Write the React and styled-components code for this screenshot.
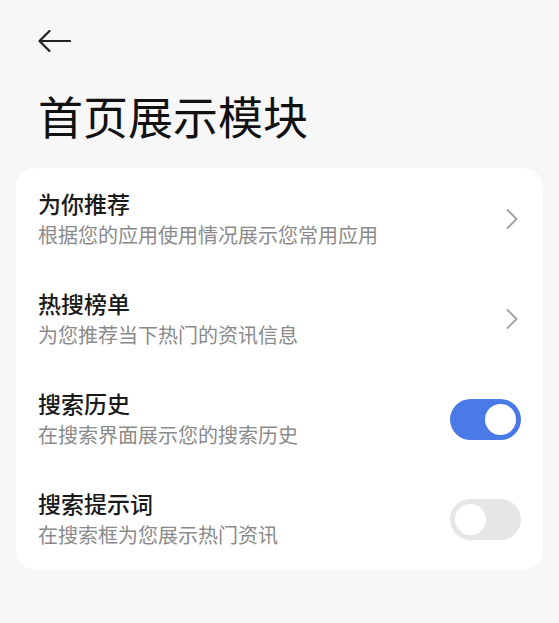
import React, { useState } from "react";
import styled, { createGlobalStyle } from "styled-components";

const GlobalStyle = createGlobalStyle`
  html, body {
    margin: 0;
    padding: 0;
    background: #f7f7f7;
  }
  body {
    font-family: "Noto Sans CJK SC", "Noto Sans", sans-serif;
    color: #1a1a1a;
  }
`;

const Page = styled.div`
  min-height: 623px;
  background: #f7f7f7;
  padding: 30px 16px 0 16px;
  box-sizing: border-box;
`;

const BackButton = styled.button`
  display: block;
  margin: 0 0 0 22px;
  padding: 0;
  border: none;
  background: none;
  width: 33px;
  height: 22px;
  cursor: pointer;

  svg {
    display: block;
  }
`;

const Title = styled.h1`
  margin: 36px 0 0 22px;
  font-size: 45px;
  line-height: 56px;
  font-weight: 400;
  color: #111;
`;

const Card = styled.div`
  margin-top: 24px;
  background: #fff;
  border-radius: 20px;
  padding: 1px 0;
`;

const Row = styled.div`
  display: flex;
  align-items: center;
  justify-content: space-between;
  padding: 18px 22px 18px 22px;
  height: 64px;
`;

const Texts = styled.div`
  display: flex;
  flex-direction: column;
`;

const RowTitle = styled.div`
  font-size: 23px;
  line-height: 32px;
  font-weight: 500;
  color: #1a1a1a;
`;

const RowSub = styled.div`
  font-size: 20px;
  line-height: 32px;
  color: #8a8a8a;
`;

const Chevron = styled.svg`
  margin-right: 2px;
  flex-shrink: 0;
`;

const Track = styled.button`
  position: relative;
  width: 71px;
  height: 41px;
  border: none;
  padding: 0;
  border-radius: 21px;
  background: ${(p) => (p.on ? "#4a7ae8" : "#e6e6e6")};
  cursor: pointer;
  flex-shrink: 0;
`;

const Knob = styled.span`
  position: absolute;
  top: 5px;
  left: ${(p) => (p.on ? "35px" : "5px")};
  width: 31px;
  height: 31px;
  border-radius: 50%;
  background: #fff;
`;

function Toggle({ on, onChange }) {
  return (
    <Track on={on} onClick={onChange}>
      <Knob on={on} />
    </Track>
  );
}

const items = [
  { title: "为你推荐", sub: "根据您的应用使用情况展示您常用应用", type: "link" },
  { title: "热搜榜单", sub: "为您推荐当下热门的资讯信息", type: "link" },
  { title: "搜索历史", sub: "在搜索界面展示您的搜索历史", type: "toggle", on: true },
  { title: "搜索提示词", sub: "在搜索框为您展示热门资讯", type: "toggle", on: false },
];

export default function App() {
  const [toggles, setToggles] = useState(
    items.map((item) => !!item.on)
  );

  const flip = (i) => {
    const next = [...toggles];
    next[i] = !next[i];
    setToggles(next);
  };

  return (
    <Page>
      <GlobalStyle />
      <BackButton aria-label="返回">
        <svg width="33" height="22" viewBox="0 0 33 22" fill="none">
          <path
            d="M1.5 11H32M11.5 1L1.5 11L11.5 21"
            stroke="#222"
            strokeWidth="2.2"
            strokeLinecap="round"
            strokeLinejoin="round"
          />
        </svg>
      </BackButton>
      <Title>首页展示模块</Title>
      <Card>
        {items.map((item, i) => (
          <Row key={i}>
            <Texts>
              <RowTitle>{item.title}</RowTitle>
              <RowSub>{item.sub}</RowSub>
            </Texts>
            {item.type === "link" ? (
              <Chevron width="14" height="22" viewBox="0 0 14 22" fill="none">
                <path
                  d="M2.5 2L11.5 11L2.5 20"
                  stroke="#a0a0a0"
                  strokeWidth="1.8"
                  strokeLinecap="round"
                  strokeLinejoin="round"
                />
              </Chevron>
            ) : (
              <Toggle on={toggles[i]} onChange={() => flip(i)} />
            )}
          </Row>
        ))}
      </Card>
    </Page>
  );
}
